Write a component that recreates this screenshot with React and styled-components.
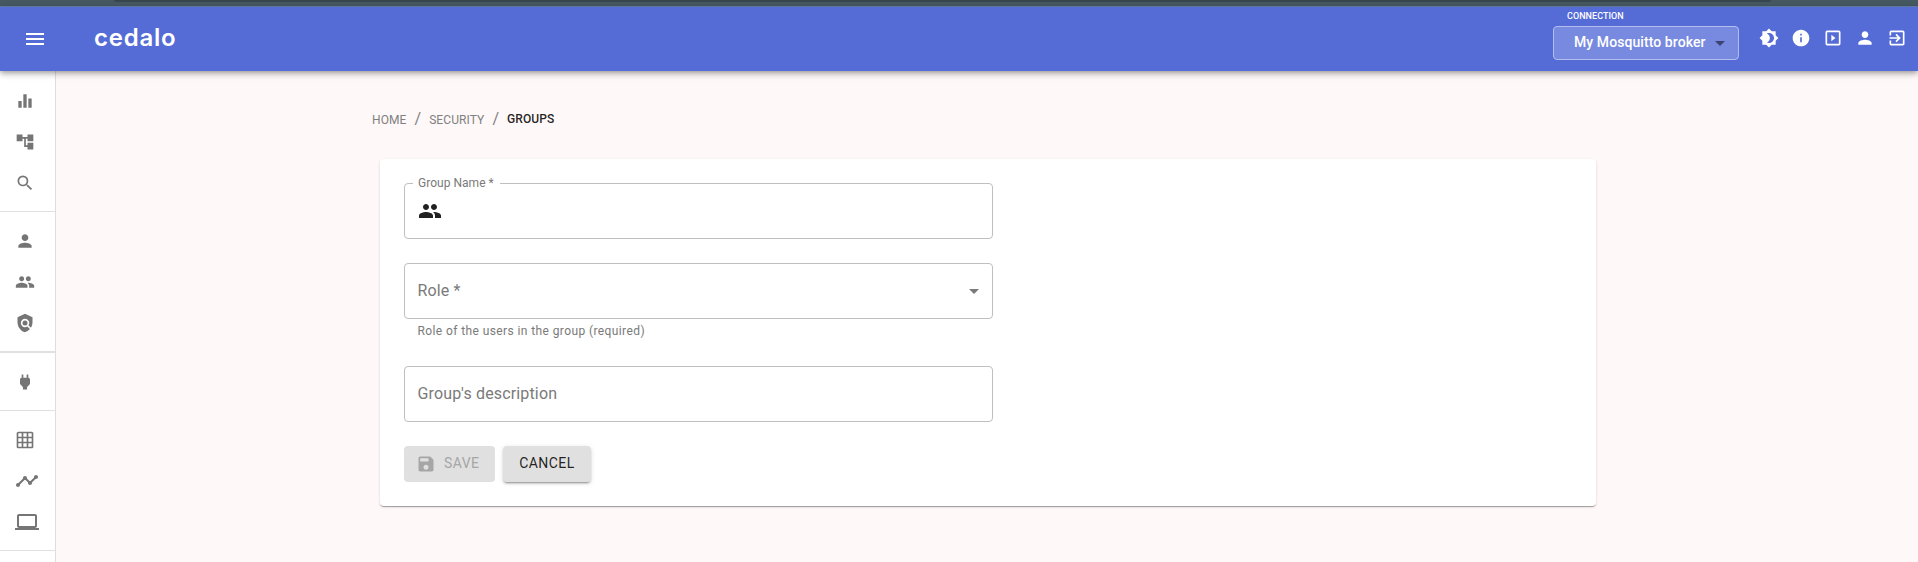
import React from "react";
import styled, { createGlobalStyle } from "styled-components";
import {
  MdMenu, MdEqualizer, MdAccountTree, MdSearch, MdPerson, MdGroup, MdPolicy, MdPower,
  MdGridOn, MdTimeline, MdComputer, MdBrightness4, MdInfo, MdExitToApp, MdSave, MdArrowDropDown,
} from "react-icons/md";

const Global = createGlobalStyle`
  *, *::before, *::after { box-sizing: border-box; }
  body {
    margin: 0;
    background: #fff8f8;
    color: rgba(0, 0, 0, 0.87);
    font-family: Roboto, "Liberation Sans", sans-serif;
    overflow: hidden;
  }
  svg { display: block; flex: none; }
`;

const Page = styled.div`
  display: flex;
  flex-direction: column;
  height: 562px;
  overflow: hidden;
`;

const BrowserEdge = styled.div`
  flex: none;
  height: 6px;
  padding: 0 147px 0 114px;
  background: #465a63;
`;

const AddressBar = styled.div`
  height: 2px;
  background: #37474d;
  border-radius: 0 0 6px 6px;
`;

const Header = styled.header`
  flex: none;
  z-index: 2;
  display: flex;
  align-items: center;
  height: 65px;
  padding: 0 9px 0 23px;
  border-top: 1px solid #5f7899;
  background: #556cd6;
  color: #fff;
  box-shadow: 0 2px 4px -1px rgba(0, 0, 0, 0.2), 0 4px 5px rgba(0, 0, 0, 0.14),
    0 1px 10px rgba(0, 0, 0, 0.12);
`;

const Logo = styled.div`
  flex: 1;
  margin-left: 47px;
  font: 600 24px/30px Inter, sans-serif;
  letter-spacing: 0.75px;
  padding-bottom: 3px;
`;

const Connection = styled.div`
  width: 186px;
  height: 56px;
  margin: 0 20px 0 0;
`;

const ConnectionLabel = styled.div`
  padding-left: 14px;
  height: 15px;
  font-size: 9px;
  font-weight: 500;
  line-height: 11px;
  letter-spacing: 0.05px;
`;

const ConnectionSelect = styled.div`
  display: flex;
  align-items: center;
  justify-content: space-between;
  height: 34px;
  padding: 0 6px 2px 20px;
  border: 1px solid #b3beee;
  border-radius: 4px;
  background: #778adf;
  font-size: 14px;
  font-weight: 500;
  letter-spacing: 0.08px;

  svg { color: #3b4370; margin-top: 2px; }
`;

const Actions = styled.div`
  display: flex;
  gap: 12px;
  margin-right: 2px;
  padding-bottom: 2px;
`;

const Body = styled.div`
  flex: 1;
  display: flex;
  min-height: 0;
`;

const Sidebar = styled.nav`
  flex: none;
  width: 56px;
  padding-top: 1px;
  border-right: 1px solid #dedede;
  background: #fff;
  color: #757575;
`;

const NavGroup = styled.div`
  padding: 8px 0;
  border-bottom: ${(p) => p.$line || 1}px solid #e0e0e0;
`;

const NavItem = styled.div`
  display: flex;
  align-items: center;
  height: 41px;
  padding-left: 15px;
`;

const Main = styled.main`
  flex: 1;
  padding: 38px 0 0 316px;
`;

const Breadcrumbs = styled.div`
  display: flex;
  align-items: center;
  height: 20px;
  color: #808080;
  font-size: 12px;
  line-height: 20px;
`;

const Crumb = styled.span`
  letter-spacing: 0.1px;
  padding-top: 1px;
`;

const CurrentCrumb = styled.span`
  color: rgba(0, 0, 0, 0.87);
  font-weight: 500;
  letter-spacing: 0.1px;
  padding-bottom: 1px;
`;

const Slash = styled.span`
  margin: 0 8px;
  font-size: 16px;
`;

const Card = styled.section`
  width: 1216px;
  height: 347px;
  margin: 30px 0 0 8px;
  padding: 24px;
  border-radius: 4px;
  background: #fff;
  box-shadow: 0 2px 1px -1px rgba(0, 0, 0, 0.2), 0 1px 1px rgba(0, 0, 0, 0.14),
    0 1px 3px rgba(0, 0, 0, 0.12);
`;

const Field = styled.fieldset`
  display: flex;
  align-items: center;
  justify-content: space-between;
  width: 589px;
  height: ${(p) => (p.$legend ? 62 : 56)}px;
  min-width: 0;
  margin: ${(p) => (p.$legend ? "-6px" : "0")} 0 ${(p) => p.$gap ?? 24}px;
  padding: ${(p) => (p.$legend ? "0 6px 6px 13px" : "0 6px 0 12.5px")};
  border: 1px solid #bfbfbf;
  border-radius: 4px;
  color: #7a7a7a;
  font-size: 16px;
  letter-spacing: 0.15px;
`;

const Legend = styled.legend`
  height: 12px;
  margin-left: -5px;
  padding: 0 6px 0 5px;
  font-size: 12px;
  line-height: 12px;
  letter-spacing: 0.03px;
`;

const Placeholder = styled.span`
  padding-bottom: 2px;
`;

const Adornment = styled.span`
  color: rgba(0, 0, 0, 0.87);
`;

const HelperText = styled.p`
  height: 20px;
  margin: 2px 0 25px 13.5px;
  color: #7a7a7a;
  font-size: 12px;
  line-height: 20px;
  letter-spacing: 0.4px;
`;

const ButtonRow = styled.div`
  display: flex;
  gap: 8px;
`;

const Button = styled.button`
  display: flex;
  align-items: center;
  justify-content: ${(p) => (p.$icon ? "flex-start" : "center")};
  gap: 8px;
  width: ${(p) => p.$width}px;
  height: 36px;
  padding: ${(p) => (p.$icon ? "0 0 0 12px" : "0")};
  border: 0;
  border-radius: 4px;
  background: #e0e0e0;
  color: rgba(0, 0, 0, 0.87);
  font: 450 14px/24px Roboto, sans-serif;
  letter-spacing: 0.45px;
  box-shadow: 0 3px 1px -2px rgba(0, 0, 0, 0.2), 0 2px 2px rgba(0, 0, 0, 0.14),
    0 1px 5px rgba(0, 0, 0, 0.12);

  &:disabled {
    color: #a6a6a6;
    box-shadow: none;
  }
`;

const ButtonLabel = styled.span`
  padding-bottom: 2px;
`;

const PlayBoxIcon = () => (
  <svg width="20" height="20" viewBox="0 0 24 24" fill="currentColor">
    <path d="M19 3H5a2 2 0 0 0-2 2v14a2 2 0 0 0 2 2h14a2 2 0 0 0 2-2V5a2 2 0 0 0-2-2zm0 16H5V5h14v14zM10 8v8l5-4z" />
  </svg>
);

const navigation = [
  { items: [[MdEqualizer, 20], [MdAccountTree, 20], [MdSearch, 20]] },
  { line: 2, items: [[MdPerson, 20], [MdGroup, 20], [MdPolicy, 20]] },
  { items: [[MdPower, 20]] },
  { items: [[MdGridOn, 20], [MdTimeline, 24], [MdComputer, 24]] },
];

export default function App() {
  return (
    <Page>
      <Global />
      <BrowserEdge><AddressBar /></BrowserEdge>
      <Header>
        <MdMenu size={24} />
        <Logo>cedalo</Logo>
        <Connection>
          <ConnectionLabel>CONNECTION</ConnectionLabel>
          <ConnectionSelect>
            My Mosquitto broker
            <MdArrowDropDown size={24} />
          </ConnectionSelect>
        </Connection>
        <Actions>
          <MdBrightness4 size={20} />
          <MdInfo size={20} />
          <PlayBoxIcon />
          <MdPerson size={20} />
          <MdExitToApp size={20} />
        </Actions>
      </Header>
      <Body>
        <Sidebar>
          {navigation.map((group, g) => (
            <NavGroup key={g} $line={group.line}>
              {group.items.map(([Icon, size], i) => (
                <NavItem key={i}><Icon size={size} /></NavItem>
              ))}
            </NavGroup>
          ))}
        </Sidebar>
        <Main>
          <Breadcrumbs>
            <Crumb>HOME</Crumb>
            <Slash>/</Slash>
            <Crumb>SECURITY</Crumb>
            <Slash>/</Slash>
            <CurrentCrumb>GROUPS</CurrentCrumb>
          </Breadcrumbs>
          <Card>
            <Field $legend>
              <Legend>Group Name *</Legend>
              <Adornment><MdGroup size={24} /></Adornment>
            </Field>
            <Field $gap={0}>
              <Placeholder>Role *</Placeholder>
              <MdArrowDropDown size={24} />
            </Field>
            <HelperText>Role of the users in the group (required)</HelperText>
            <Field><Placeholder>Group's description</Placeholder></Field>
            <ButtonRow>
              <Button $width={91} $icon disabled>
                <MdSave size={20} />
                <ButtonLabel>SAVE</ButtonLabel>
              </Button>
              <Button $width={88}><ButtonLabel>CANCEL</ButtonLabel></Button>
            </ButtonRow>
          </Card>
        </Main>
      </Body>
    </Page>
  );
}
